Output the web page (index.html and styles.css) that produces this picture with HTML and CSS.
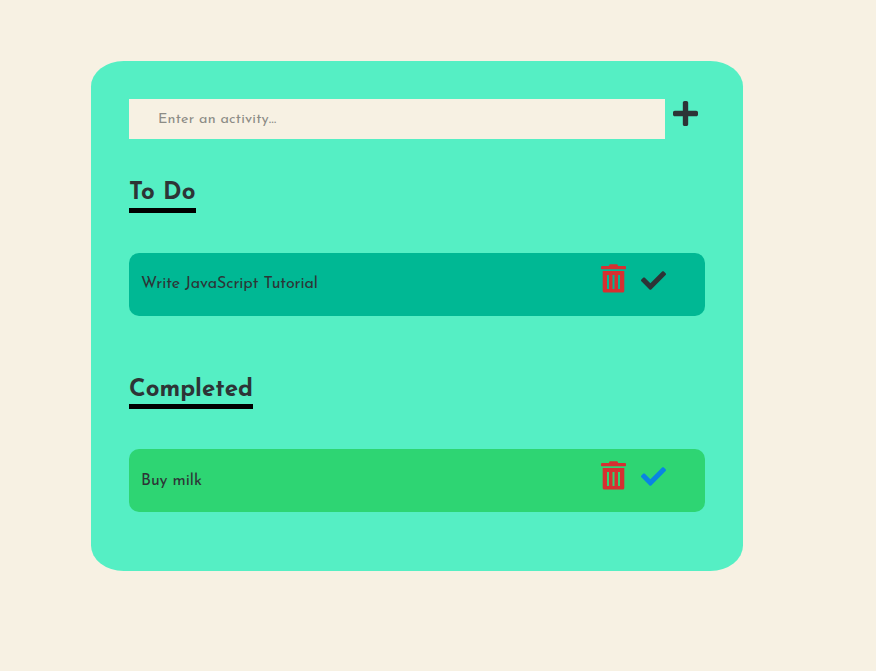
FILE: index.html
```html
<!DOCTYPE html>
<html lang="en">
<head>
<meta charset="utf-8">
<title>To Do</title>
<link rel="stylesheet" href="styles.css">
</head>
<body>
<svg class="sprite" aria-hidden="true">
  <symbol id="plus" viewBox="0 0 448 448"><path d="M416 176H272V32c0-17.700-14.300-32-32-32h-32c-17.700 0-32 14.300-32 32v144H32c-17.700 0-32 14.300-32 32v32c0 17.700 14.300 32 32 32h144v144c0 17.700 14.300 32 32 32h32c17.700 0 32-14.300 32-32V272h144c17.700 0 32-14.300 32-32v-32c0-17.700-14.300-32-32-32z"/></symbol>
  <symbol id="check" viewBox="0 0 512 512"><path d="M173.898 439.404l-166.400-166.400c-9.997-9.997-9.997-26.206 0-36.204l36.203-36.204c9.997-9.998 26.207-9.998 36.204 0L192 312.690 432.095 72.596c9.997-9.997 26.207-9.997 36.204 0l36.203 36.204c9.997 9.997 9.997 26.206 0 36.204l-294.400 294.401c-9.998 9.997-26.207 9.997-36.204-.001z"/></symbol>
  <symbol id="trash" viewBox="0 0 25 29"><path fill-rule="evenodd" d="M8 1.500Q8.300.3 9.500.3h6q1.200 0 1.500 1.200V2h7q1 0 1 1v1.500q0 .8-.8.800H.8Q0 5.300 0 4.500V3q0-1 1-1h7zM1.700 7h21.600v20q0 1.600-1.600 1.600H3.300Q1.700 28.600 1.700 27zM6 11v14h2V11zm5.500 0v14h2V11zm5.500 0v14h2V11z"/></symbol>
</svg>
<main class="card">
  <form class="entry">
    <input class="field" type="text" placeholder="Enter an activity…">
    <button class="add" type="button" aria-label="Add"><svg class="plus"><use href="#plus"/></svg></button>
  </form>
  <h2 class="heading todo">To Do</h2>
  <div class="item">
    <span class="label write">Write JavaScript Tutorial</span>
    <svg class="trash"><use href="#trash"/></svg>
    <svg class="check"><use href="#check"/></svg>
  </div>
  <h2 class="heading completed">Completed</h2>
  <div class="item done">
    <span class="label buy">Buy milk</span>
    <svg class="trash"><use href="#trash"/></svg>
    <svg class="check"><use href="#check"/></svg>
  </div>
</main>
</body>
</html>
```
FILE: styles.css
```css
* { box-sizing: border-box; }
body {
  margin: 0;
  padding: 61px 0 0 91px;
  background: #f7f1e3;
  color: #2d3436;
  font-family: "Josefin Sans", Lato, sans-serif;
}
.sprite { display: none; }
svg { display: block; fill: currentColor; flex: none; }
.card {
  width: 652px;
  height: 510px;
  padding: 38px;
  border-radius: 5%;
  background: #55efc4;
}
.entry { display: flex; align-items: flex-start; height: 40px; margin: 0; }
.field {
  width: 536px;
  height: 40px;
  padding: 0 29px;
  border: 0;
  background: #f7f1e3;
  font: 14.4px "Josefin Sans", Lato, sans-serif;
  letter-spacing: .18px;
}
.field::placeholder { color: #8c8c86; opacity: 1; }
.add { margin: 2px 0 0 8px; padding: 0; border: 0; background: none; color: #2d3436; }
.plus { width: 25px; height: 25px; }
.heading {
  width: 67px;
  height: 36px;
  margin: 38px 0 40px;
  border-bottom: 5px solid #000;
  font-size: 24px;
  line-height: 33px;
  white-space: nowrap;
}
.todo { letter-spacing: .3px; }
.completed { width: 124px; margin-top: 57px; line-height: 35px; letter-spacing: 0; }
.item {
  display: flex;
  align-items: flex-start;
  height: 63px;
  padding: 11px 39px 0 12px;
  border-radius: 10px;
  background: #00b894;
}
.done { background: #2ed573; }
.label { flex: 1; font-size: 16px; line-height: 40px; letter-spacing: -.08px; }
.buy { line-height: 42px; letter-spacing: 0; }
.trash { width: 25px; height: 29px; color: #d63031; }
.check { width: 25px; height: 25px; margin: 4px 0 0 15px; }
.done .trash { margin-top: .5px; }
.done .check { color: #0984e3; }
```
